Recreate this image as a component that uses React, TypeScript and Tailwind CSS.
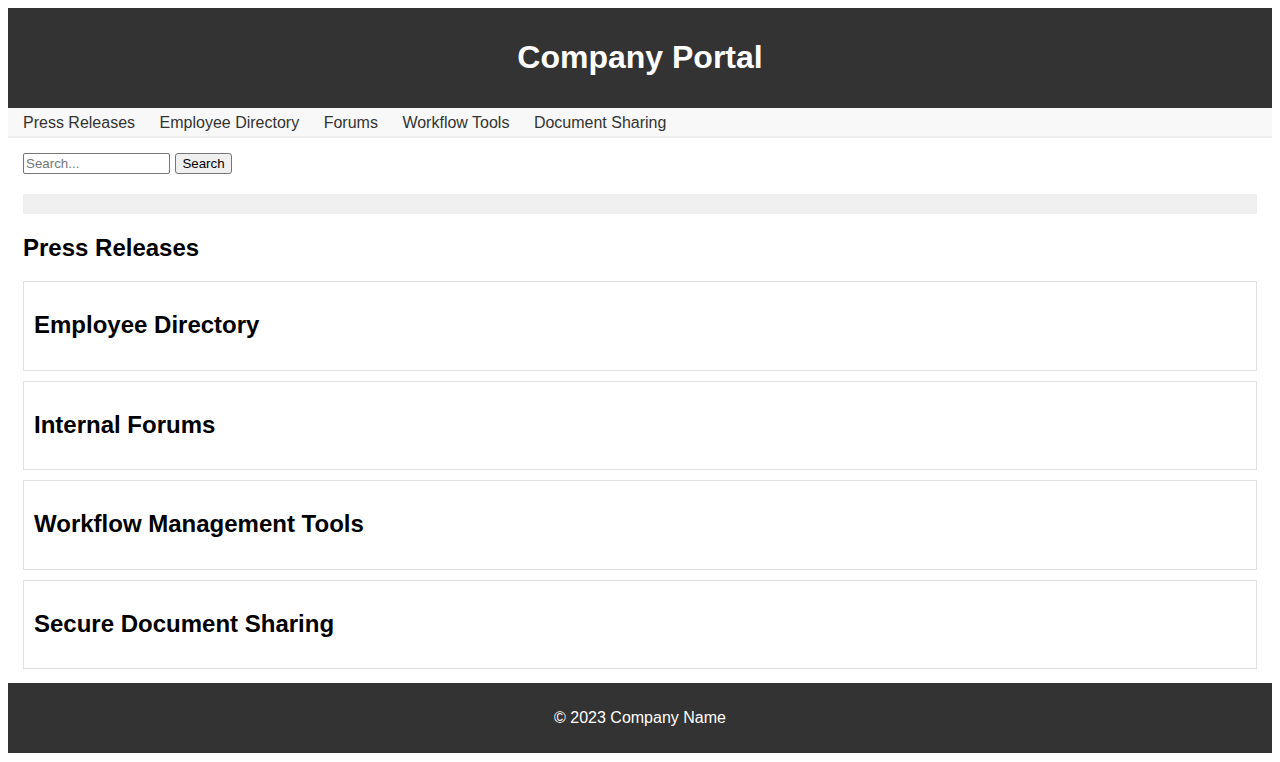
const sections = [
  'Employee Directory',
  'Internal Forums',
  'Workflow Management Tools',
  'Secure Document Sharing',
]

const navLinks = ['Press Releases', 'Employee Directory', 'Forums', 'Workflow Tools', 'Document Sharing']

export default function App() {
  return (
    <div className="p-2 bg-white font-['Liberation_Sans',Arial,sans-serif] text-black">
      <header className="bg-[#333] pt-[31px] pb-[32px] text-center">
        <h1 className="text-[32px] font-bold leading-[normal] text-white">Company Portal</h1>
      </header>

      <nav className="flex gap-[24.5px] px-[15px] pt-[6px] pb-[4px] bg-[#f8f8f8] border-b-2 border-[#eee] text-[16px] leading-[normal] text-[#333]">
        {navLinks.map((l) => (
          <a key={l} href="#" className="text-[#333]">
            {l}
          </a>
        ))}
      </nav>

      <main className="px-[15px] pb-[14px]">
        <form className="flex items-center gap-[5px] pt-[15px]" onSubmit={(e) => e.preventDefault()}>
          <input
            type="text"
            placeholder="Search..."
            className="w-[147px] h-[21px] px-[2px] border border-[#767676] rounded-[2px] text-[13.33px] placeholder:text-[#757575] outline-none"
          />
          <button
            type="submit"
            className="w-[57px] h-[21px] border border-[#767676] rounded-[3px] bg-[#efefef] text-[13.33px] text-black"
          >
            Search
          </button>
        </form>

        <div className="mt-5 h-5 bg-[#f0f0f0]" />

        <h2 className="mt-[20px] mb-[19px] text-[24px] font-bold leading-[normal]">Press Releases</h2>

        <div className="flex flex-col gap-[10px]">
          {sections.map((s) => (
            <section key={s} className="border border-[#e0e0e0] pt-[29px] pb-[30.5px] pl-[10px]">
              <h2 className="text-[24px] font-bold leading-[normal]">{s}</h2>
            </section>
          ))}
        </div>
      </main>

      <footer className="bg-[#333] py-[26px] text-center text-[16px] leading-[normal] text-white">
        <p>© 2023 Company Name</p>
      </footer>
    </div>
  )
}
